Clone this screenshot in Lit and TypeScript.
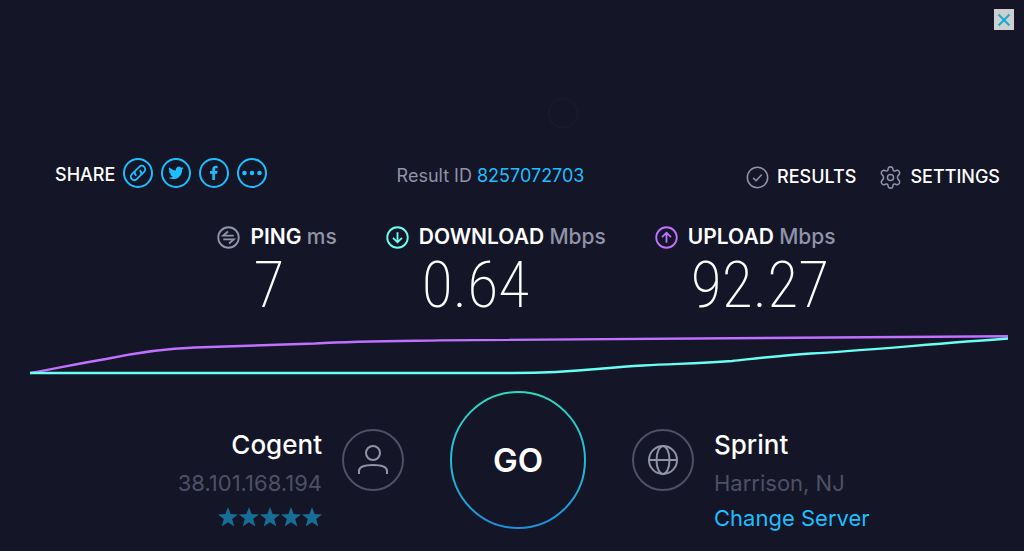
import { LitElement, html, css, svg } from "lit";
import { customElement } from "lit/decorators.js";

const checkIcon = html`<svg class="icon" viewBox="0 0 24 24" aria-hidden="true"><circle cx="12" cy="12" r="10.6" /><path d="M7.5 12.4l3 3 6-6.6" /></svg>`;
const gearIcon = html`<svg class="icon" viewBox="0 0 24 24" aria-hidden="true">
  <path d="M9.7 2.2Q10 .9 12 .9T14.300 2.200L14.800 4.500Q15.300 5.400 16.500 5.200L18.700 4.500Q20.300 4.200 21.200 5.900T21.200 8.500L19.600 10.300Q18.900 12 19.600 13.700L21.200 15.500Q22.100 16.600 21.200 18.100T18.700 19.500L16.500 18.800Q15.300 18.600 14.800 19.500L14.300 21.800Q14 23.100 12 23.100T9.700 21.800L9.200 19.500Q8.700 18.600 7.500 18.800L5.300 19.500Q3.700 19.800 2.800 18.100T2.800 15.500L4.400 13.700Q5.100 12 4.400 10.300L2.800 8.500Q1.900 7.400 2.800 5.900T5.300 4.500L7.500 5.200Q8.700 5.400 9.200 4.500Z" />
  <circle cx="12" cy="12" r="3.200" /></svg>`;
const pingIcon = svg`<path d="M17.500 10H6.500L11.500 5.800M6.500 14H17.500L12.500 18.200" />`;
const downIcon = svg`<path d="M12 6.500V17M7.300 12.300L12 17L16.700 12.300" />`;
const upIcon = svg`<path d="M12 17.500V7M7.300 11.700L12 7L16.700 11.700" />`;

const shares = [
  { name: "Copy link", art: svg`<g transform="rotate(-45 15 15)" class="line"><path d="M14 11.500H9.700a3.500 3.500 0 0 0 0 7H14.700a3.500 3.500 0 0 0 3.400-4.300" /><path d="M16 18.500H20.300a3.500 3.500 0 0 0 0-7H15.300a3.500 3.500 0 0 0-3.400 4.300" /></g>` },
  { name: "Twitter", art: svg`<path class="solid" transform="translate(7.300 7.200) scale(.64)" d="M23.950 4.570a10 10 0 0 1-2.820.77 4.960 4.960 0 0 0 2.160-2.720 9.900 9.900 0 0 1-3.120 1.190 4.920 4.920 0 0 0-8.380 4.480C7.690 8.100 4.070 6.130 1.640 3.160a4.920 4.920 0 0 0 1.520 6.570 4.900 4.900 0 0 1-2.230-.61v.06a4.920 4.920 0 0 0 3.950 4.830 5 5 0 0 1-2.210.08 4.940 4.940 0 0 0 4.600 3.420A9.870 9.870 0 0 1 0 19.540a13.990 13.990 0 0 0 7.550 2.210c9.050 0 14-7.500 14-13.980 0-.21 0-.42-.02-.63a9.940 9.940 0 0 0 2.420-2.570z" />` },
  { name: "Facebook", art: svg`<path class="solid" d="M13.300 22V15.800H11V13H13.300V11.200C13.300 8.900 14.700 7.700 16.700 7.700C17.600 7.700 18.300 7.800 18.600 7.800V10.300H17.200C16.100 10.300 15.900 10.900 15.900 11.600V13H18.500L18.100 15.800H15.900V22Z" />` },
  { name: "More", art: svg`<g class="solid"><circle cx="7.500" cy="15" r="2.300" /><circle cx="15" cy="15" r="2.300" /><circle cx="22.500" cy="15" r="2.300" /></g>` },
];

const stats = [
  { kind: "ping", label: "PING", unit: "ms", value: "7", icon: pingIcon },
  { kind: "download", label: "DOWNLOAD", unit: "Mbps", value: "0.64", icon: downIcon },
  { kind: "upload", label: "UPLOAD", unit: "Mbps", value: "92.27", icon: upIcon },
];

@customElement("app-root")
export class AppRoot extends LitElement {
  static styles = css`
    :host {
      display: flex;
      flex-direction: column;
      box-sizing: border-box;
      min-height: 100vh;
      overflow: hidden;
      background: #141526;
      color: #fff;
      font-family: Inter, "Liberation Sans", sans-serif;
    }
    svg { display: block; fill: none; stroke: currentColor; }
    a { color: #1cbfff; text-decoration: none; }
    button { background: none; border: 0; padding: 0; margin: 0; color: inherit; font: inherit; cursor: pointer; }
    .top { display: flex; justify-content: flex-end; padding: 9px 10px 0; }
    .close { width: 20px; height: 21px; background: #cfcfd0; color: #15acd0; }
    .close svg { width: 20px; height: 20px; stroke-width: 2; }
    .halo { align-self: center; width: 28px; height: 28px; margin: 68px 0 0 102px; border: 1px solid #1c1d2d; border-radius: 50%; }
    .bar {
      display: grid;
      grid-template-columns: auto 4fr auto 5fr auto;
      align-items: center;
      padding: 26px 24px 0 55px;
      font-size: 18px;
      line-height: 30px;
    }
    .share { display: flex; align-items: center; gap: 8px; font-weight: 500; }
    .share-label { padding-top: 4px; }
    .share button { width: 30px; height: 30px; color: #1cbfff; }
    .share svg { width: 30px; height: 30px; stroke-width: 2; }
    .share .line { stroke-width: 1.8; }
    .solid { fill: currentColor; stroke: none; }
    .result { grid-column: 3; padding-top: 6px; color: #9193a8; }
    .menu { grid-column: 5; display: flex; gap: 23px; padding-top: 8px; }
    .menu button { display: flex; align-items: center; gap: 8px; font-weight: 500; }
    .icon { width: 23px; height: 23px; color: #9193a8; stroke-width: 1.6; }
    .stats { display: flex; justify-content: center; gap: 49px; padding: 30px 0 0 29px; }
    .stat-head { display: flex; align-items: center; gap: 10px; font-size: 21px; line-height: 30px; font-weight: 600; margin: 0; }
    .stat-head svg { width: 23px; height: 23px; stroke-width: 1.9; }
    .unit { color: #9193a8; font-weight: 500; }
    .ping { color: #9193a8; }
    .download { color: #6afff3; }
    .upload { color: #bf71ff; }
    .value {
      margin: 0;
      padding-left: 36px;
      font-family: "Roboto Condensed", Roboto, sans-serif;
      font-weight: 200;
      font-size: 64px;
      line-height: 68px;
    }
    .chart { height: 44px; margin: 12px 16px 0 30px; }
    .chart svg { width: 100%; height: 44px; stroke-width: 2.4; }
    .bottom {
      display: grid;
      grid-template-columns: 1fr auto 1fr;
      gap: 46px;
      padding: 15px 16px 0 28px;
    }
    .go { width: 136px; height: 138px; position: relative; font-size: 33px; font-weight: 600; }
    .go svg { position: absolute; inset: 0; width: 136px; height: 138px; stroke-width: 2; }
    .party { display: flex; gap: 20px; padding-top: 37px; }
    .isp { justify-content: flex-end; text-align: right; }
    .badge { flex: none; width: 62px; height: 62px; box-sizing: border-box; border: 2px solid #4e5065; border-radius: 50%; display: grid; place-items: center; color: #9193a8; margin-top: 1px; }
    .badge svg { width: 34px; height: 34px; stroke-width: 2; }
    .name { margin: 0; font-size: 26px; line-height: 34px; font-weight: 500; }
    .sub { margin: 0; font-size: 22px; line-height: 30px; padding-top: 6px; color: #4e5065; }
    .change { display: block; font-size: 22px; line-height: 30px; padding-top: 5px; }
    .stars { display: flex; justify-content: flex-end; gap: 1px; padding-top: 9px; color: #186d96; }
    .stars svg { width: 20px; height: 20px; fill: currentColor; stroke: none; }
  `;

  render() {
    return html`
      <div class="top">
        <button class="close" aria-label="Close"><svg viewBox="0 0 20 20"><path d="M4.500 4.500L15.500 15.500M15.500 4.500L4.500 15.500" /></svg></button>
      </div>
      <div class="halo"></div>
      <div class="bar">
        <div class="share">
          <span class="share-label">SHARE</span>
          ${shares.map((s) => html`<button aria-label=${s.name}><svg viewBox="0 0 30 30"><circle cx="15" cy="15" r="14" />${s.art}</svg></button>`)}
        </div>
        <div class="result">Result ID <a href="#result">8257072703</a></div>
        <nav class="menu">
          <button>${checkIcon}RESULTS</button>
          <button>${gearIcon}SETTINGS</button>
        </nav>
      </div>
      <section class="stats">
        ${stats.map((s) => html`
          <div>
            <h2 class="stat-head">
              <svg class=${s.kind} viewBox="0 0 24 24" aria-hidden="true"><circle cx="12" cy="12" r="10.700" />${s.icon}</svg>
              <span>${s.label} <span class="unit">${s.unit}</span></span>
            </h2>
            <p class="value">${s.value}</p>
          </div>`)}
      </section>
      <div class="chart">
        <svg viewBox="0 0 978 44" preserveAspectRatio="none" aria-hidden="true">
          <path class="upload" d="M0 41C25 37 45 32 76 27C105 21 133 16.500 165 15.500C210 14 250 13 285 11.500C330 9 370 9 410 8.400C560 6 720 5 978 4.200" />
          <path class="download" d="M0 41H482C550 41 565 36 613 33.500C645 31.500 665 32 702 29C730 26 750 23.500 781 21.500C830 19 900 12 978 6.500" />
        </svg>
      </div>
      <section class="bottom">
        <div class="party isp">
          <div>
            <p class="name">Cogent</p>
            <p class="sub">38.101.168.194</p>
            <div class="stars" role="img" aria-label="5 stars">
              ${[1, 2, 3, 4, 5].map(() => html`<svg viewBox="0 0 20 20"><path d="M10 0L12.600 7.100L20 7.400L14.200 12L16.300 19.500L10 15.200L3.700 19.500L5.800 12L0 7.400L7.400 7.100Z" /></svg>`)}
            </div>
          </div>
          <div class="badge"><svg viewBox="0 0 34 34"><circle cx="17" cy="10" r="7" /><path d="M3 31V28C3 24.500 7.500 22 17 22S31 24.500 31 28V31" /></svg></div>
        </div>
        <button class="go">
          <svg viewBox="0 0 136 138" aria-hidden="true">
            <defs><linearGradient id="ring" x1="0" y1="0" x2="0" y2="1"><stop offset="0" stop-color="#2ed9c0" /><stop offset=".5" stop-color="#22bdd3" /><stop offset="1" stop-color="#1d8fdc" /></linearGradient></defs>
            <ellipse cx="68" cy="69" rx="67" ry="68" stroke="url(#ring)" />
          </svg>
          GO
        </button>
        <div class="party">
          <div class="badge"><svg viewBox="0 0 34 34"><circle cx="17" cy="17" r="14" /><ellipse cx="17" cy="17" rx="6.500" ry="14" /><path d="M3 17H31" /></svg></div>
          <div>
            <p class="name">Sprint</p>
            <p class="sub">Harrison, NJ</p>
            <a class="change" href="#servers">Change Server</a>
          </div>
        </div>
      </section>
    `;
  }
}
